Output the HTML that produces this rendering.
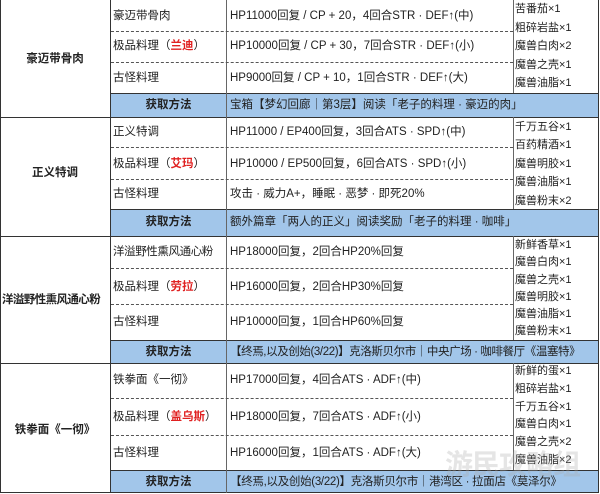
<!DOCTYPE html>
<html><head><meta charset="utf-8"><style>
*{margin:0;padding:0;box-sizing:border-box}
body{width:600px;height:494px;background:#fff;position:relative;overflow:hidden;font-family:"Liberation Sans","Noto Sans CJK SC",sans-serif;font-size:11.5px;color:#222}
.a{position:absolute}
.v{position:absolute;width:1px;background:#333}
.h{position:absolute;height:1px;background:#333}
.d{position:absolute;height:0;border-top:1px dashed #555}
.hd{position:absolute;background:#a2c6ea}
.t{position:absolute;white-space:nowrap;line-height:14px}
.b{font-weight:bold}
.r{color:#e02020;font-weight:bold}
.ing{position:absolute;left:515px;white-space:nowrap;font-size:11px}
</style></head><body>
<div class="hd" style="left:111px;top:93px;width:487px;height:24px"></div>
<div class="hd" style="left:111px;top:209px;width:487px;height:27px"></div>
<div class="hd" style="left:111px;top:340px;width:487px;height:23px"></div>
<div class="hd" style="left:111px;top:470px;width:487px;height:22px"></div>
<div class="v" style="left:0;top:0;height:493px"></div>
<div class="v" style="left:598px;top:0;height:493px"></div>
<div class="v" style="left:110px;top:0;height:493px"></div>
<div class="h" style="left:0;top:492px;width:599px"></div>
<div class="h" style="left:0;top:117px;width:599px"></div>
<div class="h" style="left:0;top:236px;width:599px"></div>
<div class="h" style="left:0;top:363px;width:599px"></div>
<div class="h" style="left:110px;top:93px;width:489px"></div>
<div class="h" style="left:110px;top:209px;width:489px"></div>
<div class="h" style="left:110px;top:340px;width:489px"></div>
<div class="h" style="left:110px;top:470px;width:489px"></div>
<div class="v" style="left:226px;top:0;height:493px;background:#666"></div>
<div class="v" style="left:513px;top:0;height:93px;background:#666"></div>
<div class="v" style="left:513px;top:117px;height:92px;background:#666"></div>
<div class="v" style="left:513px;top:236px;height:104px;background:#666"></div>
<div class="v" style="left:513px;top:363px;height:107px;background:#666"></div>
<div class="d" style="left:111px;top:31px;width:402px"></div>
<div class="d" style="left:111px;top:62px;width:402px"></div>
<div class="d" style="left:111px;top:147px;width:402px"></div>
<div class="d" style="left:111px;top:179px;width:402px"></div>
<div class="d" style="left:111px;top:268px;width:402px"></div>
<div class="d" style="left:111px;top:304px;width:402px"></div>
<div class="d" style="left:111px;top:398px;width:402px"></div>
<div class="d" style="left:111px;top:435px;width:402px"></div>

<div class="t b" style="left:0;width:110px;text-align:center;top:52px">豪迈带骨肉</div>
<div class="t" style="left:113px;top:9px">豪迈带骨肉</div>
<div class="t" style="left:113px;top:39px">极品料理（<span class="r">兰迪</span>）</div>
<div class="t" style="left:113px;top:71px">古怪料理</div>
<div class="t" style="left:230px;top:9px">HP11000回复 / CP + 20，4回合STR · DEF↑(中)</div>
<div class="t" style="left:230px;top:39px">HP10000回复 / CP + 30，7回合STR · DEF↑(小)</div>
<div class="t" style="left:230px;top:71px">HP9000回复 / CP + 10，1回合STR · DEF↑(大)</div>
<div class="t b" style="left:111px;width:115px;text-align:center;top:98px">获取方法</div>
<div class="t" style="left:230px;top:98px">宝箱【梦幻回廊｜第3层】阅读「老子的料理 · 豪迈的肉」</div>
<div class="ing" style="top:0;line-height:18.6px">苦番茄×1<br>粗碎岩盐×1<br>魔兽白肉×2<br>魔兽之壳×1<br>魔兽油脂×1</div>

<div class="t b" style="left:0;width:110px;text-align:center;top:166px">正义特调</div>
<div class="t" style="left:113px;top:125px">正义特调</div>
<div class="t" style="left:113px;top:157px">极品料理（<span class="r">艾玛</span>）</div>
<div class="t" style="left:113px;top:187px">古怪料理</div>
<div class="t" style="left:230px;top:125px">HP11000 / EP400回复，3回合ATS · SPD↑(中)</div>
<div class="t" style="left:230px;top:157px">HP10000 / EP500回复，6回合ATS · SPD↑(小)</div>
<div class="t" style="left:230px;top:187px">攻击 · 威力A+，睡眠 · 恶梦 · 即死20%</div>
<div class="t b" style="left:111px;width:115px;text-align:center;top:215px">获取方法</div>
<div class="t" style="left:230px;top:215px">额外篇章「两人的正义」阅读奖励「老子的料理 · 咖啡」</div>
<div class="ing" style="top:118px;line-height:18.4px">千万五谷×1<br>百药精酒×1<br>魔兽明胶×1<br>魔兽油脂×1<br>魔兽粉末×2</div>

<div class="t b" style="left:2px;top:293px;font-size:11.5px;letter-spacing:-0.6px">洋溢野性熏风通心粉</div>
<div class="t" style="left:113px;top:245px;letter-spacing:-0.4px">洋溢野性熏风通心粉</div>
<div class="t" style="left:113px;top:280px">极品料理（<span class="r">劳拉</span>）</div>
<div class="t" style="left:113px;top:315px">古怪料理</div>
<div class="t" style="left:230px;top:245px">HP18000回复，2回合HP20%回复</div>
<div class="t" style="left:230px;top:280px">HP16000回复，2回合HP30%回复</div>
<div class="t" style="left:230px;top:315px">HP10000回复，1回合HP60%回复</div>
<div class="t b" style="left:111px;width:115px;text-align:center;top:345px">获取方法</div>
<div class="t" style="left:230px;top:345px;letter-spacing:-0.4px">【终焉,以及创始(3/22)】克洛斯贝尔市｜中央广场 · 咖啡餐厅《温塞特》</div>
<div class="ing" style="top:237px;line-height:17.3px">新鲜香草×1<br>魔兽白肉×1<br>魔兽之壳×1<br>魔兽明胶×1<br>魔兽油脂×1<br>魔兽粉末×1</div>

<div class="t b" style="left:0;width:110px;text-align:center;top:423px">铁拳面《一彻》</div>
<div class="t" style="left:113px;top:373px">铁拳面《一彻》</div>
<div class="t" style="left:113px;top:410px">极品料理（<span class="r">盖乌斯</span>）</div>
<div class="t" style="left:113px;top:446px">古怪料理</div>
<div class="t" style="left:230px;top:373px">HP17000回复，4回合ATS · ADF↑(中)</div>
<div class="t" style="left:230px;top:410px">HP18000回复，7回合ATS · ADF↑(小)</div>
<div class="t" style="left:230px;top:446px">HP16000回复，1回合ATS · ADF↑(大)</div>
<div class="t b" style="left:111px;width:115px;text-align:center;top:475px">获取方法</div>
<div class="t" style="left:230px;top:475px;letter-spacing:-0.3px">【终焉,以及创始(3/22)】克洛斯贝尔市｜港湾区 · 拉面店《莫泽尔》</div>
<div class="ing" style="top:363px;line-height:17.8px">新鲜的蛋×1<br>粗碎岩盐×1<br>千万五谷×1<br>魔兽白肉×1<br>魔兽之壳×2<br>魔兽油脂×2</div>

<div class="t b" style="left:445px;top:448px;font-size:28px;line-height:34px;color:rgba(170,170,170,0.3);letter-spacing:-1px">游民攻略组</div>
</body></html>
